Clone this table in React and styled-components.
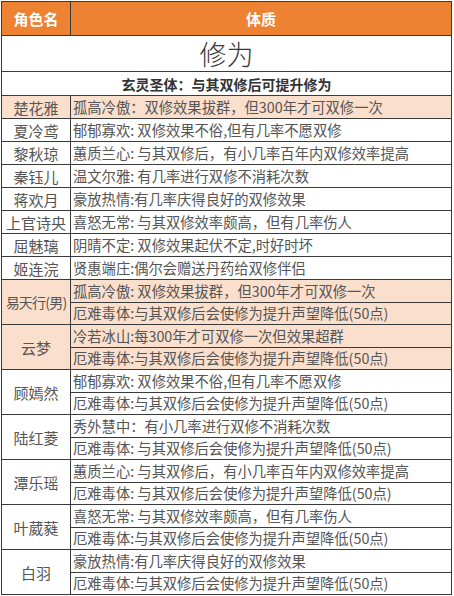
import styled, { createGlobalStyle } from 'styled-components'

const GlobalStyle = createGlobalStyle`
  html, body {
    margin: 0;
    padding: 0;
    background: #ffffff;
  }
  body {
    font-family: "Noto Sans CJK SC", "Noto Sans", sans-serif;
  }
`

// each character: name + one or two traits
const singles = [
  { name: '楚花雅', traits: ['孤高冷傲：双修效果拔群，但300年才可双修一次'], hl: true },
  { name: '夏冷鸢', traits: ['郁郁寡欢: 双修效果不俗,但有几率不愿双修'] },
  { name: '黎秋琼', traits: ['蕙质兰心: 与其双修后，有小几率百年内双修效率提高'] },
  { name: '秦钰儿', traits: ['温文尔雅: 有几率进行双修不消耗次数'] },
  { name: '蒋欢月', traits: ['豪放热情:有几率庆得良好的双修效果'] },
  { name: '上官诗央', traits: ['喜怒无常: 与其双修效率颇高，但有几率伤人'] },
  { name: '屈魅璃', traits: ['阴晴不定: 双修效果起伏不定,时好时坏'] },
  { name: '姬连浣', traits: ['贤惠端庄:偶尔会赠送丹药给双修伴侣'] },
]

const doubles = [
  { name: '易天行(男)', long: true, traits: ['孤高冷傲: 双修效果拔群，但300年才可双修一次', '厄难毒体:与其双修后会使修为提升声望降低(50点)'], hl: true },
  { name: '云梦', traits: ['冷若冰山:每300年才可双修一次但效果超群', '厄难毒体:与其双修后会使修为提升声望降低(50点)'], hl: true },
  { name: '顾嫣然', traits: ['郁郁寡欢: 双修效果不俗,但有几率不愿双修', '厄难毒体:与其双修后会使修为提升声望降低(50点)'] },
  { name: '陆红菱', traits: ['秀外慧中：有小几率进行双修不消耗次数', '厄难毒体: 与其双修后会使修为提升声望降低(50点)'] },
  { name: '潭乐瑶', traits: ['蕙质兰心: 与其双修后，有小几率百年内双修效率提高', '厄难毒体: 与其双修后会使修为提升声望降低(50点)'] },
  { name: '叶葳蕤', traits: ['喜怒无常: 与其双修效率颇高，但有几率伤人', '厄难毒体:与其双修后会使修为提升声望降低(50点)'] },
  { name: '白羽', traits: ['豪放热情:有几率庆得良好的双修效果', '厄难毒体:与其双修后会使修为提升声望降低(50点)'] },
]

export default function App() {
  return (
    <>
      <GlobalStyle />
      <Page>
        <Table>
          <colgroup>
            <col style={{ width: 69 }} />
            <col />
          </colgroup>
          <tbody>
            <HeadRow>
              <HeadCell>角色名</HeadCell>
              <HeadCell>体质</HeadCell>
            </HeadRow>
            <TitleRow>
              <TitleCell colSpan={2}>修为</TitleCell>
            </TitleRow>
            <SubtitleRow>
              <SubtitleCell colSpan={2}>玄灵圣体：与其双修后可提升修为</SubtitleCell>
            </SubtitleRow>
            {singles.map(c => (
              <Row key={c.name} $h={23} $hl={c.hl}>
                <NameCell>{c.name}</NameCell>
                <TraitCell>{c.traits[0]}</TraitCell>
              </Row>
            ))}
            {doubles.map(c => (
              c.traits.map((t, i) => (
                <Row key={c.name + i} $h={22.5} $hl={c.hl}>
                  {i === 0 && <NameCell rowSpan={2} $long={c.long}>{c.name}</NameCell>}
                  <TraitCell>{t}</TraitCell>
                </Row>
              ))
            ))}
          </tbody>
        </Table>
      </Page>
    </>
  )
}

const Page = styled.div`
  padding: 1px 2px 0 1px;
  width: 451px;
`

const Table = styled.table`
  width: 451px;
  border-collapse: collapse;
  table-layout: fixed;
  border: 1px solid #2e2e2e;
`

const HeadRow = styled.tr`
  height: 34px;
  background: #ec8232;
`

const HeadCell = styled.td`
  border: 1px solid #3a3a3a;
  color: #ffffff;
  font-weight: 700;
  font-size: 15px;
  text-align: center;
  padding: 0;
`

const TitleRow = styled.tr`
  height: 36px;
`

const TitleCell = styled.td`
  border: 1px solid #3a3a3a;
  text-align: center;
  font-size: 27px;
  font-weight: 300;
  color: #3a3a3a;
  padding: 0;
  line-height: 1;
`

const SubtitleRow = styled.tr`
  height: 24px;
`

const SubtitleCell = styled.td`
  border: 1px solid #3a3a3a;
  text-align: center;
  font-size: 14px;
  font-weight: 700;
  color: #333333;
  padding: 0;
`

const Row = styled.tr`
  height: ${p => p.$h}px;
  background: ${p => (p.$hl ? '#fbdfcd' : '#ffffff')};
`

const NameCell = styled.td`
  border: 1px solid #3a3a3a;
  text-align: center;
  font-size: ${p => (p.$long ? '14px' : '15px')};
  letter-spacing: ${p => (p.$long ? '-0.8px' : '0')};
  color: #555555;
  padding: 0;
  white-space: nowrap;
  overflow: hidden;
`

const TraitCell = styled.td`
  border: 1px solid #3a3a3a;
  font-size: 14.3px;
  color: #555555;
  padding: 0 0 0 2px;
  white-space: nowrap;
  overflow: hidden;
  line-height: 1;
`
